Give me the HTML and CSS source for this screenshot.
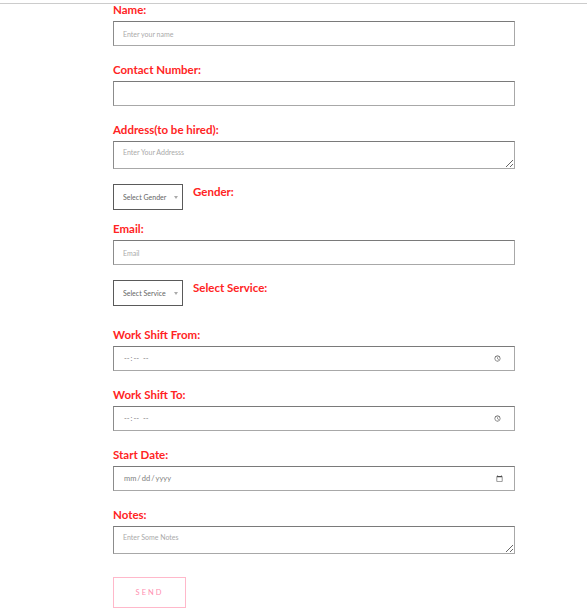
FILE: index.html
```html
<!DOCTYPE html>
<html lang="en">
<head>
    <meta charset="UTF-8">
    <meta name="viewport" content="width=device-width, initial-scale=1.0">
    <title>Hire Form</title>
    <link rel="stylesheet" href="styles.css">
</head>
<body>
    <div class="top-line"></div>

    <form class="hire-form">
        <div class="field">
            <label class="field-label" for="name">Name:</label>
            <input class="text-input" type="text" id="name" placeholder="Enter your name">
        </div>

        <div class="field">
            <label class="field-label" for="contact">Contact Number:</label>
            <input class="text-input" type="tel" id="contact">
        </div>

        <div class="field field-before-row">
            <label class="field-label" for="address">Address(to be hired):</label>
            <textarea class="text-area" id="address" placeholder="Enter Your Addresss"></textarea>
        </div>

        <div class="select-row">
            <div class="select-box">
                <select id="gender">
                    <option>Select Gender</option>
                    <option>Male</option>
                    <option>Female</option>
                </select>
            </div>
            <label class="field-label" for="gender">Gender:</label>
        </div>

        <div class="field field-before-row">
            <label class="field-label" for="email">Email:</label>
            <input class="text-input" type="email" id="email" placeholder="Email">
        </div>

        <div class="select-row select-row-last">
            <div class="select-box">
                <select id="service">
                    <option>Select Service</option>
                    <option>Cleaning</option>
                    <option>Cooking</option>
                </select>
            </div>
            <label class="field-label" for="service">Select Service:</label>
        </div>

        <div class="field">
            <label class="field-label" for="shiftFrom">Work Shift From:</label>
            <input class="text-input picker-input" type="time" id="shiftFrom">
        </div>

        <div class="field">
            <label class="field-label" for="shiftTo">Work Shift To:</label>
            <input class="text-input picker-input" type="time" id="shiftTo">
        </div>

        <div class="field">
            <label class="field-label" for="startDate">Start Date:</label>
            <input class="text-input picker-input" type="date" id="startDate">
        </div>

        <div class="field field-last">
            <label class="field-label" for="notes">Notes:</label>
            <textarea class="text-area" id="notes" placeholder="Enter Some Notes"></textarea>
        </div>

        <button class="send-btn" type="submit">SEND</button>
    </form>
</body>
</html>
```

FILE: styles.css
```css
body {
    margin: 0;
    font-family: Lato, "Open Sans", Arial, sans-serif;
    background: #fff;
}
.top-line {
    height: 3px;
    border-bottom: 1px solid #cccccc;
}
.hire-form {
    width: 402px;
    margin-left: 113px;
}
.field {
    margin-bottom: 18px;
}
.field-before-row {
    margin-bottom: 15px;
}
.field-last {
    margin-bottom: 23px;
}
.field-label {
    display: block;
    font-size: 11.5px;
    line-height: 12px;
    font-weight: 700;
    color: #ff2424;
    margin-bottom: 5px;
}
.text-input,
.text-area {
    display: block;
    box-sizing: border-box;
    width: 402px;
    height: 25px;
    padding: 0 9px;
    border: 1px solid #8c8c8c;
    border-top-color: #7a7a7a;
    border-right-color: #a8a8a8;
    border-bottom-color: #a8a8a8;
    border-radius: 0;
    font-family: inherit;
    font-size: 7px;
    color: #555;
    background: #fff;
    outline: none;
}
.text-area {
    height: 28px;
    padding: 6px 9px;
    resize: vertical;
}
.text-input::placeholder,
.text-area::placeholder {
    color: #aaaaaa;
}
.picker-input {
    color: #808080;
    font-size: 7.5px;
}
.picker-input::-webkit-calendar-picker-indicator {
    opacity: 0.7;
}
.select-row {
    display: flex;
    align-items: flex-start;
    gap: 10px;
    margin-bottom: 13px;
}
.select-row-last {
    margin-bottom: 23px;
}
.select-row .field-label {
    margin-top: 2px;
}
.select-box {
    position: relative;
    width: 70px;
    height: 26px;
}
.select-box select {
    appearance: none;
    -webkit-appearance: none;
    box-sizing: border-box;
    width: 100%;
    height: 100%;
    padding: 0 0 0 9px;
    border: 1px solid #5a5a5a;
    border-radius: 0;
    background: #fff;
    font-family: inherit;
    font-size: 7px;
    color: #666;
}
.select-box::after {
    content: "";
    position: absolute;
    right: 5px;
    top: 12px;
    border-left: 2.5px solid transparent;
    border-right: 2.5px solid transparent;
    border-top: 3px solid #aaaaaa;
}
.send-btn {
    width: 73px;
    height: 31px;
    border: 1px solid #ffb8ca;
    background: #fff;
    color: #ff8fb0;
    font-family: inherit;
    font-size: 7.5px;
    letter-spacing: 2px;
    cursor: pointer;
}
```
